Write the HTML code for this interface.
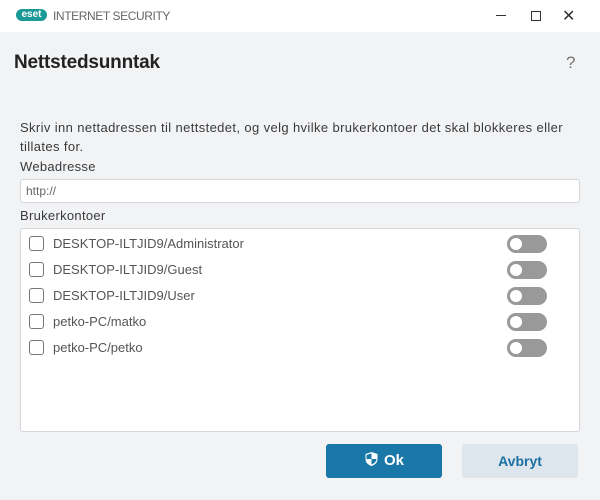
<!DOCTYPE html>
<html><head><style>
*{margin:0;padding:0;box-sizing:border-box}
body{width:600px;height:500px;background:#f2f3f5;font-family:"Liberation Sans",sans-serif;color:#3a3a3a;position:relative;overflow:hidden}
.tb{position:absolute;left:0;top:0;width:600px;height:32px;background:#fff}
.abs{position:absolute;white-space:nowrap}
.box{position:absolute;left:20px;top:228px;width:560px;height:204px;background:#fff;border:1px solid #d4d6da;border-radius:3px}
.row{position:absolute;left:8px;height:20px;font-size:13px;color:#555}
.cb{position:absolute;left:0;top:2px;width:15px;height:15px;border:1.5px solid #777;border-radius:3px}
.lbl{position:absolute;left:24px;top:2px;white-space:nowrap}
.tg{position:absolute;left:478px;top:1px;width:40px;height:18px;border-radius:9px;background:#999}
.tg:after{content:"";position:absolute;left:3px;top:3px;width:12px;height:12px;border-radius:6px;background:#fff}
</style></head><body>
<div class="tb">
  <div class="abs" style="left:16px;top:9px;width:31px;height:12px;background:#1a9a96;border-radius:6px;color:#fff;font-size:10px;font-weight:bold;text-align:center;line-height:12px">eset</div>
  <div class="abs" style="left:53px;top:9px;font-size:12px;color:#666;letter-spacing:-0.4px">INTERNET SECURITY</div>
  <div class="abs" style="left:496px;top:15px;width:10px;height:1px;background:#333"></div>
  <div class="abs" style="left:531px;top:11px;width:10px;height:10px;border:1px solid #333"></div>
  <div class="abs" style="left:562px;top:6px;font-size:16px;color:#333">✕</div>
</div>
<div class="abs" style="left:14px;top:52px;font-size:19px;color:#222;font-weight:bold;letter-spacing:-0.2px">Nettstedsunntak</div>
<div class="abs" style="left:566px;top:53px;font-size:17px;color:#777">?</div>
<div class="abs" style="left:20px;top:118px;font-size:13px;line-height:19px;letter-spacing:0.38px">Skriv inn nettadressen til nettstedet, og velg hvilke brukerkontoer det skal blokkeres eller<br>tillates for.</div>
<div class="abs" style="left:20px;top:159px;font-size:13px;letter-spacing:0.3px">Webadresse</div>
<div class="abs" style="left:20px;top:179px;width:560px;height:24px;background:#fff;border:1px solid #d4d6da;border-radius:3px;font-size:12px;color:#666;padding:4px 5px">http://</div>
<div class="abs" style="left:20px;top:208px;font-size:13px;letter-spacing:0.3px">Brukerkontoer</div>
<div class="box">
  <div class="row" style="top:5px"><div class="cb"></div><div class="lbl">DESKTOP-ILTJID9/Administrator</div><div class="tg"></div></div>
  <div class="row" style="top:31px"><div class="cb"></div><div class="lbl">DESKTOP-ILTJID9/Guest</div><div class="tg"></div></div>
  <div class="row" style="top:57px"><div class="cb"></div><div class="lbl">DESKTOP-ILTJID9/User</div><div class="tg"></div></div>
  <div class="row" style="top:83px"><div class="cb"></div><div class="lbl">petko-PC/matko</div><div class="tg"></div></div>
  <div class="row" style="top:109px"><div class="cb"></div><div class="lbl">petko-PC/petko</div><div class="tg"></div></div>
</div>
<div class="abs" style="left:326px;top:444px;width:116px;height:34px;background:#1a78a8;border-radius:3px;color:#fff;font-size:15px;font-weight:bold;text-align:center;line-height:34px">
<svg width="15" height="16" viewBox="0 0 14 16" style="vertical-align:-2px;margin-right:5px"><path d="M7 1L1 3v5c0 4 3 6 6 7c3-1 6-3 6-7V3z" fill="#fff"/><path d="M7 8h5c-.3 3-2.5 4.5-5 5.5zM7 8H2V4l5-1.6z" fill="#1a78a8"/></svg>Ok</div>
<div class="abs" style="left:462px;top:444px;width:116px;height:34px;background:#dde6ec;border-radius:3px;color:#1a6fa0;font-size:14px;font-weight:bold;text-align:center;line-height:34px">Avbryt</div>
</body></html>
